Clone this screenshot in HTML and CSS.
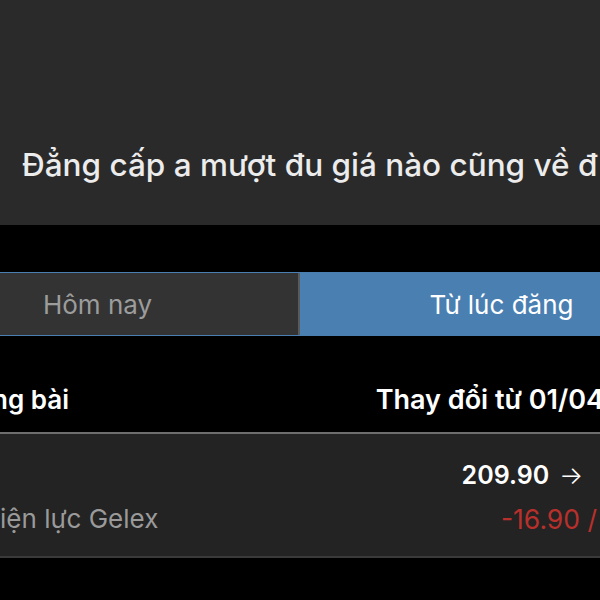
FILE: index.html
```html
<!DOCTYPE html>
<html lang="vi">
<head>
<meta charset="utf-8">
<link rel="stylesheet" href="styles.css">
</head>
<body>
<div class="page">
  <header class="hero">
    <h1 class="title">Đẳng cấp a mượt đu giá nào cũng về đ</h1>
  </header>
  <div class="gap"></div>
  <nav class="segments">
    <div class="seg seg-off">Hôm nay</div>
    <div class="seg seg-on">Từ lúc đăng</div>
  </nav>
  <div class="thead">
    <span class="th-left">ng bài</span>
    <span class="th-right">Thay đổi từ 01/04</span>
  </div>
  <div class="row">
    <div class="row-line">
      <span></span>
      <span class="price">209.90<span class="arrow">→</span></span>
    </div>
    <div class="row-line">
      <span class="name">iện lực Gelex</span>
      <span class="change">-16.90 /</span>
    </div>
  </div>
</div>
</body>
</html>
```

FILE: styles.css
```css
html, body {
  margin: 0;
  padding: 0;
  background: #000;
  overflow: hidden;
  width: 600px;
  height: 600px;
}
body {
  font-family: Inter, "Noto Sans", "Liberation Sans", sans-serif;
  color: #fff;
}
.page {
  width: 600px;
}
.hero {
  background: #2a2a2a;
  height: 225px;
  display: flex;
  align-items: flex-end;
  padding: 0 0 0 22px;
  box-sizing: border-box;
}
.title {
  margin: 0 0 42px 0;
  font-size: 31.5px;
  font-weight: 500;
  color: #ececec;
  white-space: nowrap;
  line-height: 36px;
}
.gap {
  height: 47px;
}
.segments {
  display: grid;
  grid-template-columns: 1fr 1fr;
  width: 806px;
  margin-left: -103px;
  height: 64px;
  box-sizing: border-box;
  border-top: 1px solid #4a7fb2;
  border-bottom: 1px solid #4a7fb2;
}
.seg {
  display: flex;
  align-items: center;
  justify-content: center;
  font-size: 26px;
  white-space: nowrap;
}
.seg-off {
  background: #333333;
  color: #9c9c9c;
  border-right: 2px solid #5a5a5a;
}
.seg-on {
  background: #4a7fb2;
  color: #fff;
}
.thead {
  display: flex;
  justify-content: space-between;
  align-items: center;
  width: 604px;
  height: 98px;
  font-weight: 600;
  white-space: nowrap;
  border-bottom: 2px solid #6e6e6e;
  box-sizing: border-box;
  padding-top: 30px;
}
.th-left {
  font-size: 26px;
  margin-left: -8px;
}
.th-right {
  font-size: 27px;
}
.row {
  background: #232323;
  width: 600px;
  height: 124px;
  box-sizing: border-box;
  border-bottom: 2px solid #3a3a3a;
  display: flex;
  flex-direction: column;
  justify-content: center;
  gap: 14px;
  white-space: nowrap;
}
.row-line {
  display: flex;
  justify-content: space-between;
  line-height: 30px;
}
.price {
  font-size: 25px;
  font-weight: 600;
  color: #fff;
  margin-right: 17px;
  margin-top: 4px;
}
.arrow {
  font-weight: 300;
  margin-left: 10px;
}
.name {
  font-size: 26px;
  color: #9a9a9a;
}
.change {
  font-size: 26.5px;
  color: #b8302c;
  margin-right: 3px;
}
```
